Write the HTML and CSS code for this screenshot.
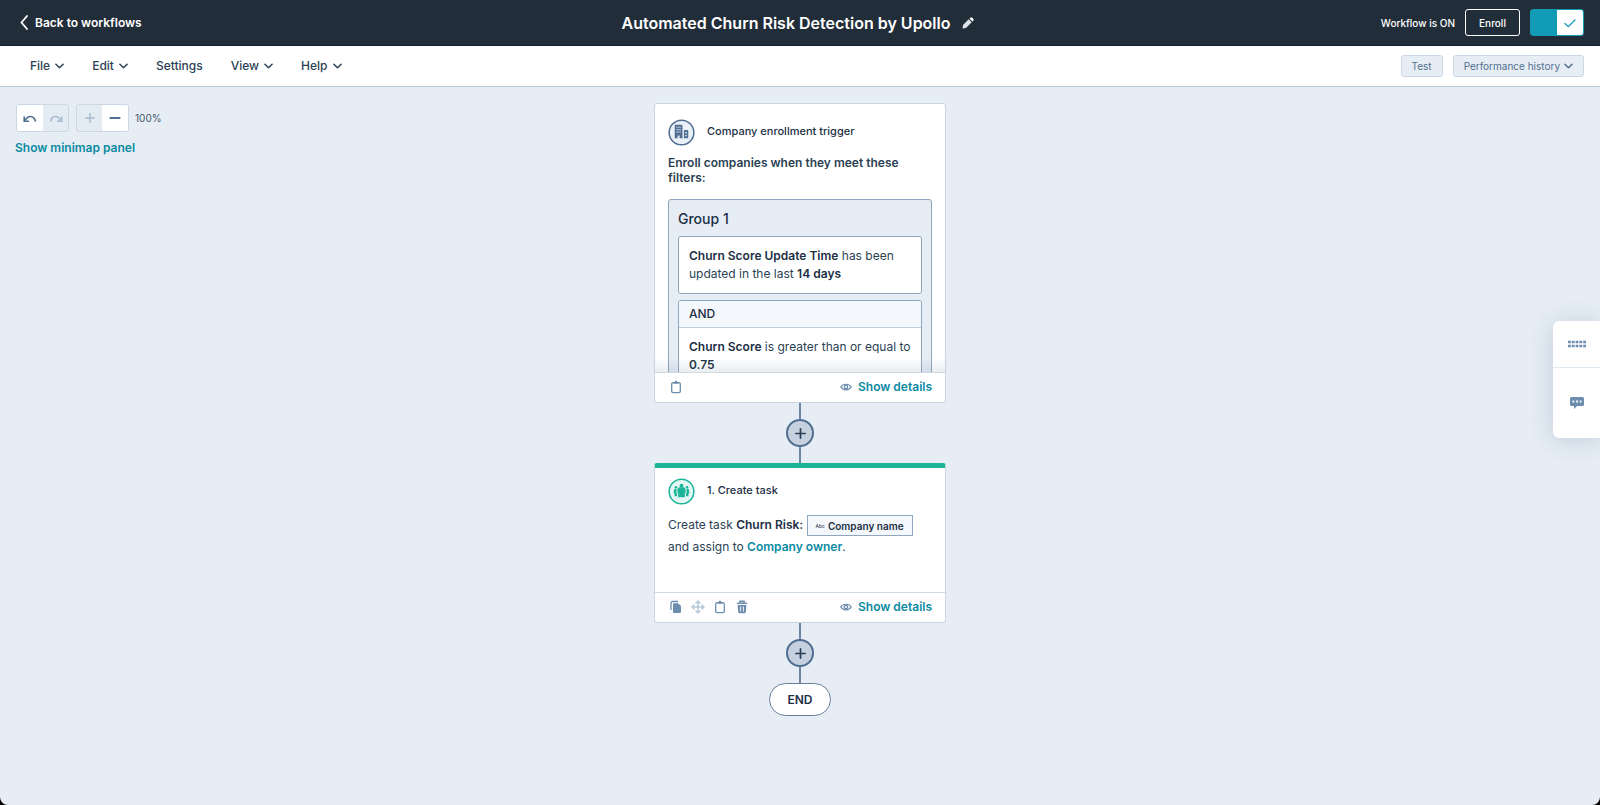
FILE: index.html
```html
<!DOCTYPE html>
<html lang="en">
<head>
<meta charset="utf-8">
<title>Automated Churn Risk Detection by Upollo</title>
<link rel="stylesheet" href="styles.css">
</head>
<body>
<svg class="sprite" aria-hidden="true">
  <symbol id="chevron" viewBox="0 0 10 8"><path d="M1 2l4 4 4-4" fill="none" stroke="currentColor" stroke-width="1.6" stroke-linecap="round" stroke-linejoin="round"/></symbol>
  <symbol id="undo" viewBox="0 0 14 10"><path d="M2 7.500C5 2 11 2 12.500 8.500" fill="none" stroke="currentColor" stroke-width="1.700"/><path d="M1.200 3.500V8.300H6" fill="none" stroke="currentColor" stroke-width="1.600"/></symbol>
  <symbol id="plus" viewBox="0 0 12 12"><path d="M6 1v10M1 6h10" fill="none" stroke="currentColor" stroke-width="1.900" stroke-linecap="round"/></symbol>
  <symbol id="eye" viewBox="0 0 12 10"><path d="M.8 5C3 1.300 9 1.300 11.200 5 9 8.700 3 8.700 .8 5z" fill="none" stroke="currentColor" stroke-width="1.200"/><circle cx="6" cy="5" r="1.700" fill="none" stroke="currentColor" stroke-width="1.300"/></symbol>
  <symbol id="clipboard" viewBox="0 0 12 14"><rect x="1.700" y="2.700" width="8.600" height="10" rx="1.400" fill="none" stroke="currentColor" stroke-width="1.300"/><path d="M3.500 3.800V2.200h1.200C4.900.3 7.100.3 7.300 2.200h1.200v1.600z" fill="currentColor"/></symbol>
</svg>
<div class="app">
  <header class="topbar">
    <a class="back" href="#"><svg width="8" height="15" viewBox="0 0 8 15"><path d="M7 1L1.500 7.500 7 14" fill="none" stroke="currentColor" stroke-width="1.800" stroke-linecap="round"/></svg>Back to workflows</a>
    <div class="title-group">
      <h1 class="title">Automated Churn Risk Detection by Upollo</h1>
      <button class="rename" aria-label="Rename workflow"><svg width="12" height="12" viewBox="0 0 12 12"><path d="M1 8L6.700 2.300 9.700 5.300 4 11 .6 11.400z" fill="#dfe4e9"/><path d="M7.500 1.600L8.600.6q.8-.6 1.600.1l1.100 1.100q.7.800.1 1.600L10.400 4.500z" fill="#fff"/></svg></button>
    </div>
    <div class="status">
      <label for="power">Workflow is ON</label>
      <button class="enroll">Enroll</button>
      <span class="switch"><input id="power" type="checkbox" checked><svg class="switch-mark" width="12" height="9" viewBox="0 0 12 9"><path d="M1 4.500L4.300 7.700 11 1" fill="none" stroke="#129bb4" stroke-width="1.300" stroke-linecap="round"/></svg></span>
    </div>
  </header>
  <nav class="menubar">
    <div class="menus">
      <button class="menu">File<svg class="chev"><use href="#chevron"/></svg></button>
      <button class="menu">Edit<svg class="chev"><use href="#chevron"/></svg></button>
      <button class="menu">Settings</button>
      <button class="menu">View<svg class="chev"><use href="#chevron"/></svg></button>
      <button class="menu">Help<svg class="chev"><use href="#chevron"/></svg></button>
    </div>
    <div class="tools">
      <button class="tool">Test</button>
      <button class="tool">Performance history<svg class="chev"><use href="#chevron"/></svg></button>
    </div>
  </nav>
  <main class="canvas">
    <div class="view-controls">
      <div class="control-row">
        <div class="pair">
          <button class="step" aria-label="Undo"><svg width="14" height="10"><use href="#undo"/></svg></button>
          <button class="step" aria-label="Redo" disabled><svg class="flip" width="14" height="10"><use href="#undo"/></svg></button>
        </div>
        <div class="pair">
          <button class="step" aria-label="Zoom in" disabled><svg width="10" height="10" viewBox="0 0 12 12"><use href="#plus"/></svg></button>
          <button class="step" aria-label="Zoom out"><svg width="12" height="12" viewBox="0 0 12 12"><path d="M1.500 6h9" stroke="currentColor" stroke-width="2.200" stroke-linecap="round"/></svg></button>
        </div>
        <span class="zoom-level">100%</span>
      </div>
      <a class="minimap" href="#">Show minimap panel</a>
    </div>

    <div class="flow">
      <section class="card">
        <div class="card-body clipped">
          <div class="card-head">
            <svg class="badge" width="27" height="27" viewBox="0 0 28 28"><circle cx="14" cy="14" r="12.800" fill="#e9f0f7" stroke="#506e91" stroke-width="1.600"/><path d="M7 7q0-1 1-1h6q1 0 1 1v13h-3v-3h-2v3H7z" fill="#506e91"/><path d="M8.500 8.500h5M8.500 11h5M8.500 13.500h5" stroke="#c9d6e4" stroke-width=".9"/><path d="M16.500 12.500q0-1 1-1h2.500q1 0 1 1V20h-4.500z" fill="#506e91"/><path d="M17.800 13.500h1.900v1.500h-1.900zM17.800 16.500h1.900V18h-1.900z" fill="#c9d6e4"/></svg>
            <h2 class="card-title">Company enrollment trigger</h2>
          </div>
          <p class="lead">Enroll companies when they meet these filters:</p>
          <div class="group">
            <h3 class="group-title">Group 1</h3>
            <div class="filter"><p class="rule"><b>Churn Score Update Time</b> has been updated in the last <b>14 days</b></p></div>
            <div class="filter">
              <div class="joiner">AND</div>
              <p class="rule"><b>Churn Score</b> is greater than or equal to <b>0.75</b></p>
            </div>
          </div>
        </div>
        <footer class="card-foot">
          <div class="actions"><button class="action" aria-label="Copy details"><svg width="12" height="14"><use href="#clipboard"/></svg></button></div>
          <a class="details" href="#"><svg width="12" height="10"><use href="#eye"/></svg>Show details</a>
        </footer>
      </section>

      <div class="link-line"></div>
      <button class="add" aria-label="Add action"><svg width="11" height="11" viewBox="0 0 12 12"><use href="#plus"/></svg></button>
      <div class="link-line"></div>

      <section class="card task">
        <div class="card-body">
          <div class="card-head">
            <svg class="badge" width="27" height="27" viewBox="0 0 28 28"><circle cx="14" cy="14" r="12.800" fill="#e5f7f4" stroke="#1cb59a" stroke-width="1.600"/><g fill="#1cb59a"><circle cx="14" cy="8" r="2"/><path d="M9.800 12q0-2.500 2.500-2.500h3.400q2.500 0 2.500 2.500v3.500h-.7V20h-7v-4.500h-.7z"/><circle cx="8.200" cy="9.500" r="1.300"/><path d="M8.800 11Q6 11 6 13.500v2.700h.8v2.600h2.500v-3.300H8.800z"/><circle cx="19.800" cy="9.500" r="1.300"/><path d="M19.200 11Q22 11 22 13.500v2.700h-.8v2.600h-2.500v-3.300h.5z"/></g></svg>
            <h2 class="card-title">1. Create task</h2>
          </div>
          <p class="summary">Create task <b>Churn Risk:</b> <span class="token"><small class="token-type">Abc</small>Company name</span><br>and assign to <a class="owner" href="#">Company owner</a>.</p>
        </div>
        <footer class="card-foot">
          <div class="actions">
            <button class="action" aria-label="Clone"><svg width="12" height="14" viewBox="0 0 12 14"><path d="M1 10V3q0-1.500 1.500-1.500H8" fill="none" stroke="currentColor" stroke-width="1.300"/><path d="M3 4.500q0-1.200 1.200-1.200H8L11 6v5.800q0 1.200-1.200 1.200H4.200Q3 13 3 11.800z" fill="currentColor"/></svg></button>
            <button class="action" aria-label="Move" disabled><svg width="14" height="14" viewBox="0 0 14 14"><path d="M7 1.500v11M1.500 7h11M5 3l2-2 2 2M5 11l2 2 2-2M3 5L1 7l2 2M11 5l2 2-2 2" fill="none" stroke="currentColor" stroke-width="1.500" stroke-linecap="round" stroke-linejoin="round"/></svg></button>
            <button class="action" aria-label="Copy details"><svg width="12" height="14"><use href="#clipboard"/></svg></button>
            <button class="action" aria-label="Delete"><svg width="12" height="14" viewBox="0 0 12 14"><path d="M1.500 3.200h9M4 3V1.200h4V3" fill="none" stroke="currentColor" stroke-width="1.500" stroke-linecap="round"/><path d="M1.600 5h8.800l-.6 7q-.1 1.200-1.300 1.200h-5q-1.200 0-1.300-1.200z" fill="currentColor"/><path d="M4.600 6.500v5M7.400 6.500v5" stroke="#fff" stroke-width=".9"/></svg></button>
          </div>
          <a class="details" href="#"><svg width="12" height="10"><use href="#eye"/></svg>Show details</a>
        </footer>
      </section>

      <div class="link-line"></div>
      <button class="add" aria-label="Add action"><svg width="11" height="11" viewBox="0 0 12 12"><use href="#plus"/></svg></button>
      <div class="link-line"></div>
      <div class="end">END</div>
    </div>

    <aside class="dock">
      <button class="dock-item" aria-label="Shortcuts"><svg width="20" height="8" viewBox="0 0 20 8"><path d="M1 2h18M1 6h18" stroke="currentColor" stroke-width="2.600" stroke-dasharray="2.800 1"/></svg></button>
      <button class="dock-item tall" aria-label="Comments"><svg width="14" height="12" viewBox="0 0 14 12"><path d="M1.500 0h11Q14 0 14 1.500v6Q14 9 12.500 9H7l-3 3V9H1.500Q0 9 0 7.500v-6Q0 0 1.500 0z" fill="currentColor"/><path d="M2.500 4.500h9" stroke="#fff" stroke-width="1.800" stroke-dasharray="1.800"/></svg></button>
    </aside>
  </main>
</div>
</body>
</html>
```

FILE: styles.css
```css
* { box-sizing: border-box; }
body { margin: 0; background: #000; color: #2b3f54; font-family: Inter, "Open Sans", sans-serif; font-size: 12px; }
button { font: inherit; color: inherit; border: 0; padding: 0; background: none; display: flex; align-items: center; justify-content: center; }
a { color: #0b8aa3; text-decoration: none; }
h1, h2, h3, p { margin: 0; }
b { font-weight: 600; color: #1c2f45; }
.sprite { position: absolute; width: 0; height: 0; }
.app { min-height: 100vh; display: flex; flex-direction: column; background: #e6edf4; border-radius: 0 0 8px 8px; overflow: hidden; }

.topbar { display: grid; grid-template-columns: 1fr auto 1fr; align-items: center; height: 46px; padding: 0 16px 0 20px; background: #222d3a; border-bottom: 1px solid #10202f; color: #fff; }
.back { display: flex; align-items: center; gap: 7px; color: #fff; font-size: 12px; font-weight: 600; }
.title-group { display: flex; align-items: center; gap: 12px; padding-top: 1px; }
.title { font-size: 16px; line-height: 20px; font-weight: 600; }
.rename { width: 20px; justify-content: flex-start; }
.status { display: flex; align-items: center; justify-content: flex-end; gap: 10px; font-size: 10px; font-weight: 500; }
.enroll { height: 27px; width: 55px; border: 1px solid #fff; border-radius: 3px; }
.switch { position: relative; display: flex; width: 54px; height: 27px; }
.switch input { appearance: none; margin: 0; width: 100%; height: 100%; border: 1px solid #129bb4; border-radius: 3px; background: linear-gradient(to right, #129bb4 50%, #fff 50%); }
.switch-mark { position: absolute; right: 8px; top: 10px; pointer-events: none; }

.menubar { display: flex; align-items: center; justify-content: space-between; height: 41px; padding: 0 16px 1px 30px; background: #fff; border-bottom: 1px solid #b9cbda; }
.menus { display: flex; gap: 28px; }
.menu { gap: 5px; font-size: 12px; font-weight: 500; }
.chev { width: 9px; height: 8px; }
.tools { display: flex; gap: 10px; }
.tool { height: 22px; padding: 0 10px; gap: 4px; border: 1px solid #cbd8e4; border-radius: 3px; background: #e6edf4; color: #52708f; font-size: 10px; }

.canvas { position: relative; flex: 1; padding: 16px 0 40px; }
.view-controls { position: absolute; left: 15px; top: 17px; }
.control-row { display: flex; align-items: center; gap: 6px; }
.pair { display: flex; border: 1px solid #cbd8e4; border-radius: 3px; overflow: hidden; margin-left: 1px; }
.step { width: 26px; height: 26px; background: #fff; color: #516f90; }
.step:disabled { width: 25px; background: #e3ebf3; color: #a9bccf; }
.flip { transform: scaleX(-1); }
.zoom-level { font-size: 10px; color: #43576c; }
.minimap { display: block; margin-top: 8px; line-height: 16px; font-weight: 600; }

.flow { display: flex; flex-direction: column; align-items: center; }
.card { width: 292px; background: #fff; border: 1px solid #c8d5e2; border-radius: 3px; overflow: hidden; }
.card-body { padding: 15px 13px 0; }
.clipped { position: relative; height: 268px; overflow: hidden; }
.clipped::after { content: ""; position: absolute; inset: auto 0 0; height: 14px; background: linear-gradient(rgba(80, 110, 140, 0), rgba(80, 110, 140, 0.12)); }
.card-head { display: flex; gap: 12px; }
.card-title { font-size: 11px; line-height: 25px; font-weight: 500; color: #1c2f45; }
.lead { margin-top: 9px; line-height: 15px; font-weight: 600; }
.group { margin-top: 14px; height: 240px; padding: 0 9px; border: 1px solid #8ea6bf; border-radius: 3px; background: #e6edf4; }
.group-title { font-size: 14px; line-height: 36px; height: 36px; font-weight: 500; color: #1c2f45; padding-top: 1px; }
.filter { margin-bottom: 6px; border: 1px solid #8ea6bf; border-radius: 3px; background: #fff; overflow: hidden; }
.rule { padding: 10px; line-height: 18px; }
.joiner { padding: 0 10px; line-height: 26px; font-weight: 500; background: #f4f7fb; border-bottom: 1px solid #c1cfdd; color: #1c2f45; }
.card-foot { display: flex; align-items: center; justify-content: space-between; height: 30px; padding: 0 13px 2px 14px; border-top: 1px solid #d0dbe6; }
.actions { display: flex; gap: 8px; color: #6d8cae; }
.action { width: 14px; height: 14px; }
.action:disabled { color: #b9c9da; }
.details { display: flex; align-items: center; gap: 6px; font-weight: 600; }
.details svg { color: #6d8cae; }

.link-line { width: 2px; height: 16px; background: #6c85a3; }
.add { width: 28px; height: 28px; border: 2px solid #506e91; border-radius: 50%; background: #c5d1de; color: #2b3f54; }
.task { border-top: 5px solid #1cb59a; }
.task .card-body { height: 124px; padding-top: 10px; }
.summary { margin-top: 9px; line-height: 22px; }
.token { display: inline-flex; align-items: center; vertical-align: middle; gap: 3px; height: 21px; padding: 0 8px; border: 1px solid #8ea6bf; background: #f4f7fb; font-size: 10px; font-weight: 600; color: #1c2f45; }
.token-type { font-size: 5px; font-weight: 400; }
.owner { font-weight: 600; }
.end { padding: 0 17px; line-height: 31px; border: 1px solid #66809d; border-radius: 17px; background: #fff; color: #1c2f45; font-weight: 600; }

.dock { position: absolute; right: 0; top: 234px; width: 47px; border-radius: 6px 0 0 6px; background: #fff; box-shadow: 0 2px 24px rgba(70, 95, 130, 0.22); color: #6d8cae; }
.dock-item { width: 100%; height: 46px; }
.tall { height: 71px; border-top: 1px solid #dfe9f2; }
```
